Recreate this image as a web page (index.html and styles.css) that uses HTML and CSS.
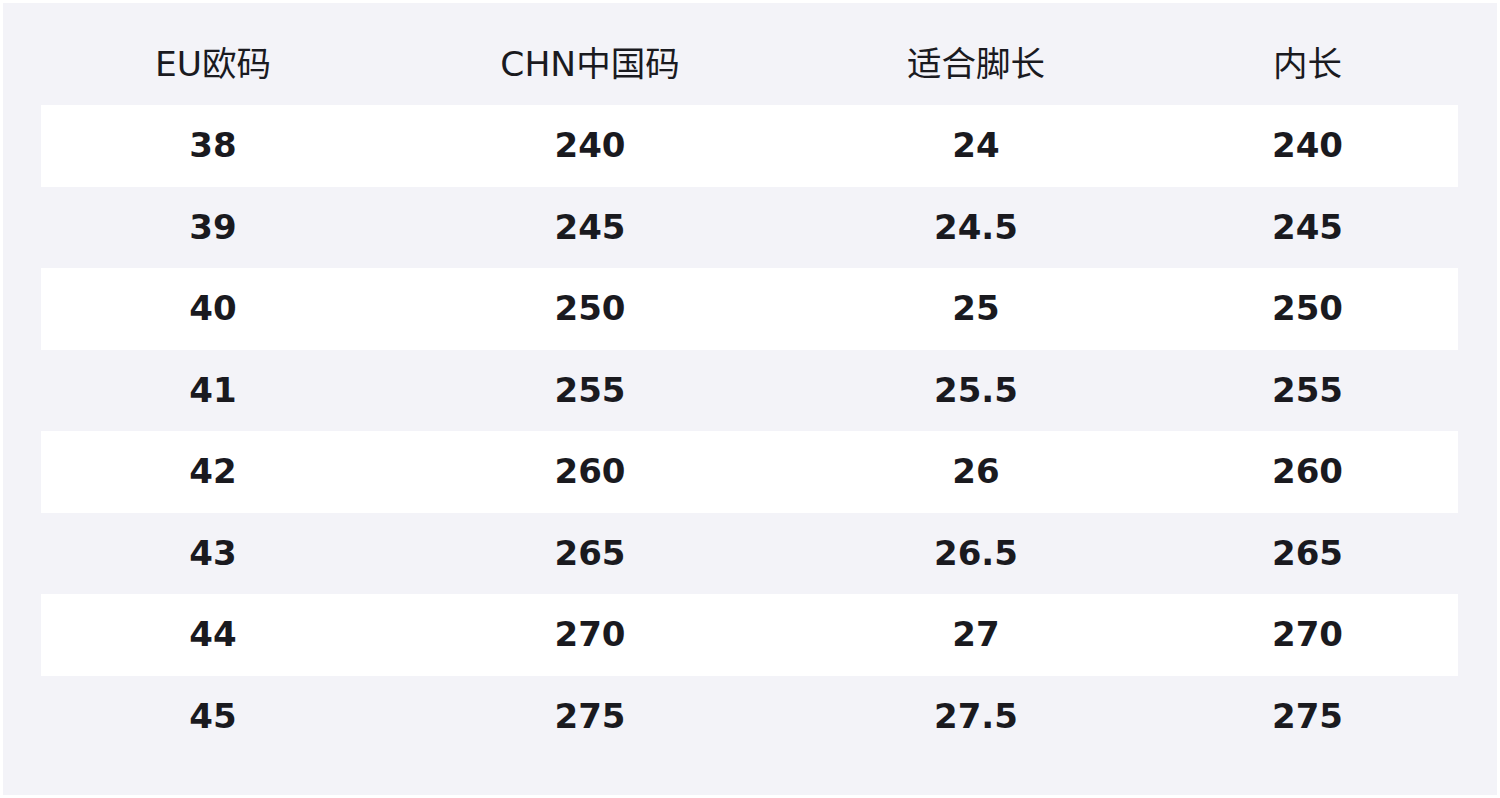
FILE: index.html
```html
<!DOCTYPE html>
<html lang="zh-CN">
<head>
<meta charset="utf-8">
<title>尺码表</title>
<link rel="stylesheet" href="styles.css">
</head>
<body>
<div class="card">
  <table class="size-table">
    <colgroup>
      <col class="c1"><col class="c2"><col class="c3"><col class="c4">
    </colgroup>
    <thead>
      <tr><th>EU欧码</th><th>CHN中国码</th><th>适合脚长</th><th>内长</th></tr>
    </thead>
    <tbody>
      <tr><td>38</td><td>240</td><td>24</td><td>240</td></tr>
      <tr><td>39</td><td>245</td><td>24.5</td><td>245</td></tr>
      <tr><td>40</td><td>250</td><td>25</td><td>250</td></tr>
      <tr><td>41</td><td>255</td><td>25.5</td><td>255</td></tr>
      <tr><td>42</td><td>260</td><td>26</td><td>260</td></tr>
      <tr><td>43</td><td>265</td><td>26.5</td><td>265</td></tr>
      <tr><td>44</td><td>270</td><td>27</td><td>270</td></tr>
      <tr><td>45</td><td>275</td><td>27.5</td><td>275</td></tr>
    </tbody>
  </table>
</div>
</body>
</html>
```
FILE: styles.css
```css
html, body {
  margin: 0;
  padding: 0;
  background: #ffffff;
}
body {
  padding: 3px 3px 3px 3px;
  font-family: "DejaVu Sans", "Noto Sans CJK SC", sans-serif;
  color: #1a1a1f;
}
.card {
  background: #f3f3f8;
  height: 792px;
  box-sizing: border-box;
  padding: 20px 39px 38px 38px;
}
.size-table {
  width: 100%;
  border-collapse: collapse;
  table-layout: fixed;
}
.c1 { width: 344px; }
.c2 { width: 410px; }
.c3 { width: 362px; }
.c4 { width: 301px; }
.size-table th {
  height: 82px;
  padding: 0 0 6px 0;
  box-sizing: border-box;
  font-weight: normal;
  font-size: 34.5px;
  text-align: center;
  vertical-align: middle;
}
.size-table td {
  height: 81.5px;
  padding: 0 0 1px 0;
  box-sizing: border-box;
  font-weight: bold;
  font-size: 34px;
  text-align: center;
  vertical-align: middle;
}
.size-table tbody tr:nth-child(odd) {
  background: #ffffff;
}
```
